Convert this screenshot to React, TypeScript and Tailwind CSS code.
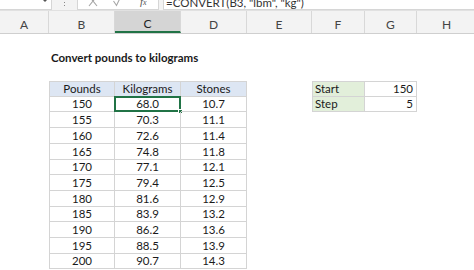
import React from 'react';

const colW = ['w-[49px]', 'w-[66px]', 'w-[66px]', 'w-[66px]', 'w-[65px]', 'w-[53px]', 'w-[52px]', 'w-[60px]'];
const letters = ['A', 'B', 'C', 'D', 'E', 'F', 'G', 'H'];

const kg = ['68.0', '70.3', '72.6', '74.8', '77.1', '79.4', '81.6', '83.9', '86.2', '88.5', '90.7'];
const stones = ['10.7', '11.1', '11.4', '11.8', '12.1', '12.5', '12.9', '13.2', '13.6', '13.9', '14.3'];

type Cell = {
  text?: string;
  cls?: string;
  selected?: boolean;
};

const bd = 'border-r border-b border-[#d4d4d4]';

function buildRows(): Cell[][] {
  const rows: Cell[][] = [];
  const empty = () => letters.map(() => ({} as Cell));

  rows.push(empty());

  const title = empty();
  title[1] = { text: 'Convert pounds to kilograms', cls: 'font-bold whitespace-nowrap overflow-visible pl-[2px]' };
  rows.push(title);

  rows.push(empty());

  const head = empty();
  head[1] = { text: 'Pounds', cls: `${bd} border-l border-t bg-[#dde6f3] justify-center` };
  head[2] = { text: 'Kilograms', cls: `${bd} border-t bg-[#dde6f3] justify-center` };
  head[3] = { text: 'Stones', cls: `${bd} border-t bg-[#dde6f3] justify-center` };
  head[5] = { text: 'Start', cls: `${bd} border-l border-t bg-[#e2efda] pl-[2px]` };
  head[6] = { text: '150', cls: `${bd} border-t justify-end pr-[3px]` };
  rows.push(head);

  kg.forEach((k, i) => {
    const r = empty();
    r[1] = { text: String(150 + i * 5), cls: `${bd} border-l justify-center` };
    r[2] = { text: k, cls: `${bd} justify-center`, selected: i === 0 };
    r[3] = { text: stones[i], cls: `${bd} justify-center` };
    if (i === 0) {
      r[5] = { text: 'Step', cls: `${bd} border-l bg-[#e2efda] pl-[2px]` };
      r[6] = { text: '5', cls: `${bd} justify-end pr-[3px]` };
    }
    rows.push(r);
  });

  return rows;
}

function FormulaBar() {
  return (
    <div className="h-[11px] bg-[#f3f3f3] flex overflow-hidden border-b border-[#e1e1e1]">
      {/* name box */}
      <div className="w-[52px] h-[10px] bg-white border-r border-b border-[#d6d6d6] flex justify-end pr-[3px]">
        <svg width="6" height="4" viewBox="0 0 6 4" className="-mt-[1px]">
          <path d="M0 0 L6 0 L3 3 Z" fill="#555" />
        </svg>
      </div>
      {/* grip dots */}
      <div className="w-[25px] flex justify-center">
        <div className="flex flex-col gap-[2px] -mt-[1px]">
          <div className="w-[1px] h-[1px] bg-[#888]" />
          <div className="w-[1px] h-[1px] bg-[#888]" />
          <div className="w-[1px] h-[1px] bg-[#888]" />
        </div>
      </div>
      {/* cancel / enter / fx */}
      <div className="w-[82px] h-[10px] bg-white border-x border-b border-[#d6d6d6] flex items-start overflow-hidden">
        <svg width="10" height="14" viewBox="0 0 10 14" className="ml-[10px] -mt-[6px]">
          <path d="M1 2 L9 12 M9 2 L1 12" stroke="#a6a6a6" strokeWidth="1.1" fill="none" />
        </svg>
        <svg width="9" height="14" viewBox="0 0 9 14" className="ml-[15px] -mt-[6px]">
          <path d="M0.5 7 L3.5 11.5 L8.5 1" stroke="#a6a6a6" strokeWidth="1.1" fill="none" />
        </svg>
        <span className="ml-[18px] -mt-[6px] text-[11px] leading-[14px] italic text-[#555] font-['Liberation_Serif',serif]">
          f<span className="text-[8px]">x</span>
        </span>
      </div>
      <div className="w-[4px]" />
      {/* formula box */}
      <div className="flex-1 h-[10px] bg-white border-l border-b border-[#d6d6d6] overflow-hidden">
        <div className="-mt-[4px] pl-[2px] text-[11.5px] leading-[14px] text-[#333] whitespace-nowrap">
          =CONVERT(B3, "lbm", "kg")
        </div>
      </div>
    </div>
  );
}

function ColumnHeaders() {
  return (
    <div className="h-[23px] flex bg-[#f3f3f3] border-b border-[#cfcfcf]">
      {letters.map((l, i) => (
        <div
          key={l}
          className={`${colW[i]} shrink-0 flex items-center justify-center text-[12px] pt-[5px] border-r border-[#d8d8d8] ${
            i === 2 ? 'bg-[#d5d5d5] border-b-2 border-b-[#217346] text-[#222]' : 'text-[#444]'
          }`}
        >
          {l}
        </div>
      ))}
    </div>
  );
}

export default function App() {
  const rows = buildRows();
  return (
    <div className="w-[474px] h-[270px] overflow-hidden bg-white font-['Lato','Liberation_Sans',sans-serif] text-[11.5px] text-[#1a1a1a]">
      <FormulaBar />
      <ColumnHeaders />
      <div className="flex flex-col">
        {rows.map((row, ri) => (
          <div key={ri} className="flex h-[15.7px]">
            {row.map((c, ci) => (
              <div
                key={ci}
                className={`${colW[ci]} shrink-0 h-full flex items-center relative ${c.cls ?? ''}`}
              >
                {c.text}
                {c.selected && (
                  <div className="absolute -left-[1px] -top-[1px] -right-[1px] -bottom-[1px] border-2 border-[#217346]">
                    <div className="absolute -right-[4px] -bottom-[4px] w-[5px] h-[5px] bg-[#217346] border border-white" />
                  </div>
                )}
              </div>
            ))}
          </div>
        ))}
      </div>
    </div>
  );
}
